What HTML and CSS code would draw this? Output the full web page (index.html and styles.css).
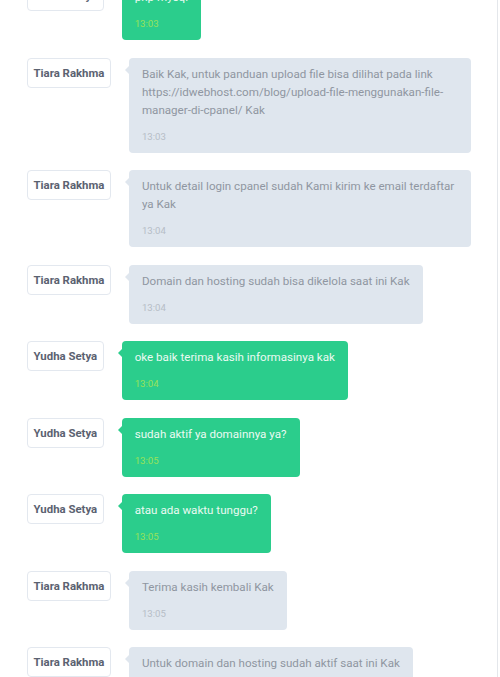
FILE: index.html
```html
<!DOCTYPE html>
<html>
<head>
<meta charset="utf-8">
<link rel="stylesheet" href="styles.css">
</head>
<body>
<div class="chat">
  <div class="list">
    <div class="row">
      <div class="name">Yudha Setya</div>
      <div class="bubble me"><div class="text">php mysql</div><div class="time">13:03</div></div>
    </div>
    <div class="row">
      <div class="name">Tiara Rakhma</div>
      <div class="bubble cs"><div class="text">Baik Kak, untuk panduan upload file bisa dilihat pada link https://idwebhost.com/blog/upload-file-menggunakan-file-manager-di-cpanel/ Kak</div><div class="time">13:03</div></div>
    </div>
    <div class="row">
      <div class="name">Tiara Rakhma</div>
      <div class="bubble cs"><div class="text">Untuk detail login cpanel sudah Kami kirim ke email terdaftar ya Kak</div><div class="time">13:04</div></div>
    </div>
    <div class="row">
      <div class="name">Tiara Rakhma</div>
      <div class="bubble cs"><div class="text">Domain dan hosting sudah bisa dikelola saat ini Kak</div><div class="time">13:04</div></div>
    </div>
    <div class="row">
      <div class="name">Yudha Setya</div>
      <div class="bubble me"><div class="text">oke baik terima kasih informasinya kak</div><div class="time">13:04</div></div>
    </div>
    <div class="row">
      <div class="name">Yudha Setya</div>
      <div class="bubble me"><div class="text">sudah aktif ya domainnya ya?</div><div class="time">13:05</div></div>
    </div>
    <div class="row">
      <div class="name">Yudha Setya</div>
      <div class="bubble me"><div class="text">atau ada waktu tunggu?</div><div class="time">13:05</div></div>
    </div>
    <div class="row">
      <div class="name">Tiara Rakhma</div>
      <div class="bubble cs"><div class="text">Terima kasih kembali Kak</div><div class="time">13:05</div></div>
    </div>
    <div class="row">
      <div class="name">Tiara Rakhma</div>
      <div class="bubble cs"><div class="text">Untuk domain dan hosting sudah aktif saat ini Kak</div><div class="time">13:05</div></div>
    </div>
  </div>
</div>
</body>
</html>
```
FILE: styles.css
```css
html, body {
  margin: 0;
  padding: 0;
  background: #ffffff;
  overflow: hidden;
}
body {
  font-family: Roboto, "Liberation Sans", sans-serif;
}
.chat {
  width: 498px;
  height: 677px;
  box-sizing: border-box;
  border-right: 1px solid #e4e7eb;
  overflow: hidden;
}
.list {
  margin-top: -19px;
  padding-left: 27px;
  display: flex;
  flex-direction: column;
  gap: 17.5px;
}
.row {
  display: flex;
  align-items: flex-start;
  gap: 18px;
}
.name {
  flex: none;
  height: 30px;
  box-sizing: border-box;
  border: 1px solid #e3e8ef;
  border-radius: 4px;
  padding: 0 5.5px;
  display: flex;
  align-items: center;
  font-size: 11.4px;
  font-weight: 700;
  color: #5b6271;
  background: #fff;
}
.bubble {
  position: relative;
  max-width: 342px;
  box-sizing: border-box;
  padding: 7px 13px 9px;
  border-radius: 4px;
  font-size: 11.6px;
  line-height: 18px;
}
.bubble::before {
  content: "";
  position: absolute;
  left: -4px;
  top: 8px;
  border-style: solid;
  border-width: 4px 4px 4px 0;
  border-color: transparent;
}
.bubble .time {
  margin-top: 11px;
  font-size: 9.6px;
  line-height: 14px;
}
.me {
  background: #2bcd8c;
  color: #eafaf2;
}
.me::before {
  border-right-color: #2bcd8c;
}
.me .time {
  color: #98e25a;
}
.cs {
  background: #dfe6ee;
  color: #8f96a1;
}
.cs::before {
  border-right-color: #dfe6ee;
}
.cs .time {
  color: #b6bdc6;
}
```
